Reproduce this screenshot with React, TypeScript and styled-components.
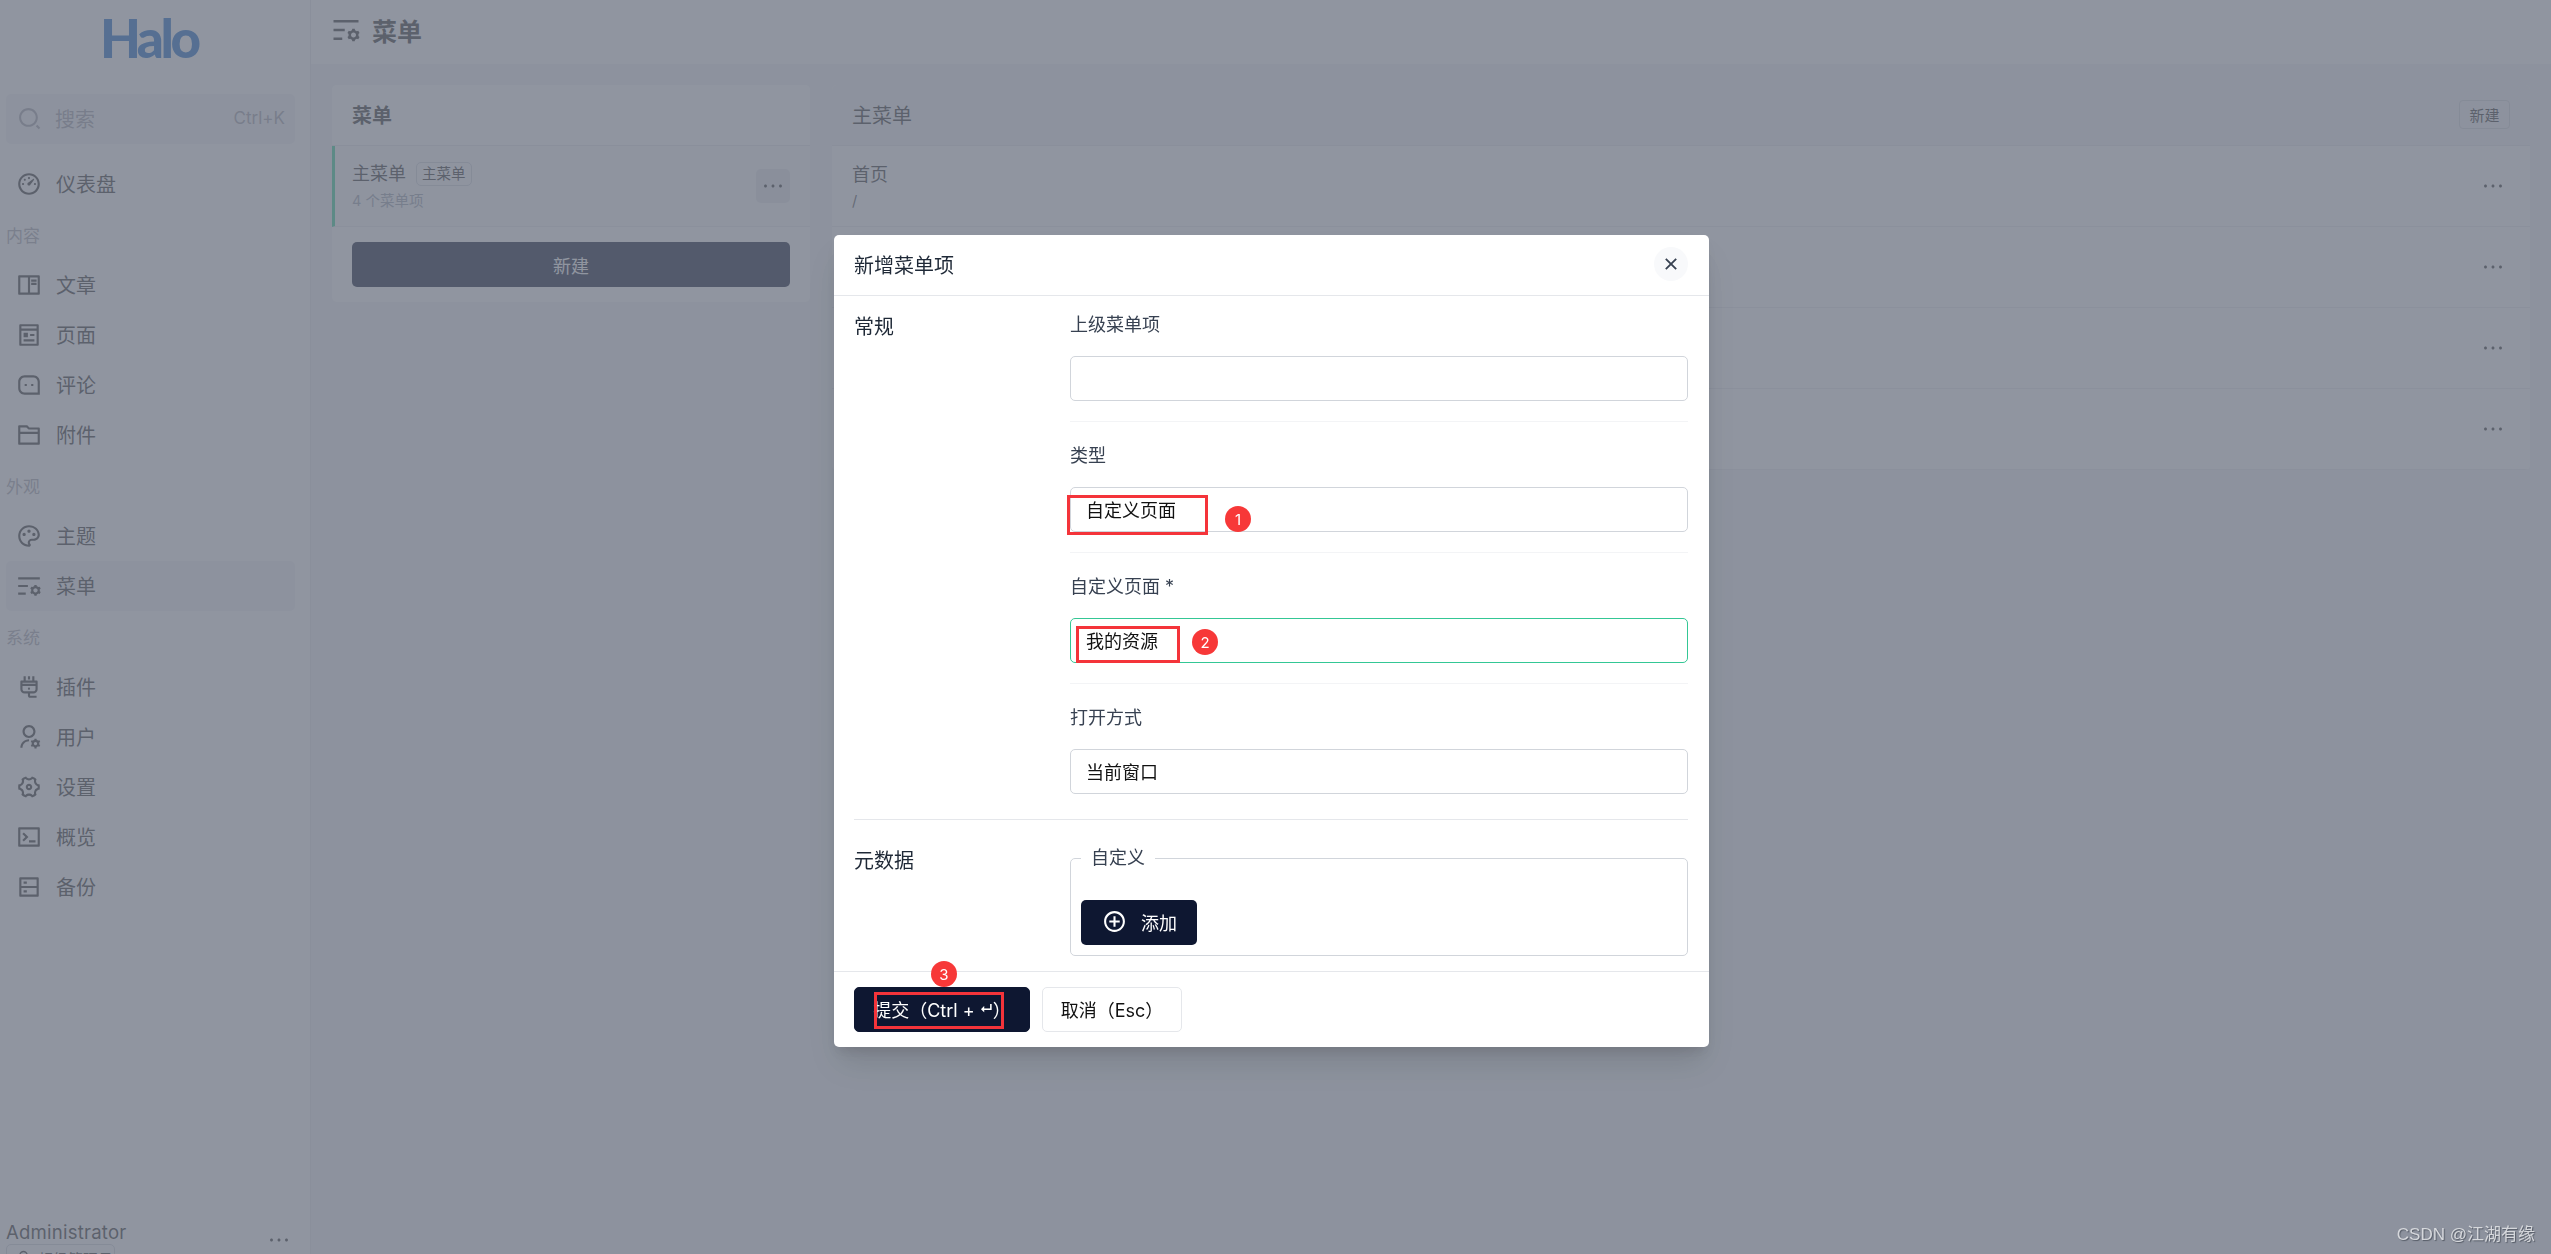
import React from "react";
import styled, { createGlobalStyle } from "styled-components";
import {
  RiAddCircleLine,
  RiBookReadLine,
  RiCloseLine,
  RiDashboard3Line,
  RiFolder2Line,
  RiListSettingsLine,
  RiMessage3Line,
  RiMoreLine,
  RiPagesLine,
  RiPaletteLine,
  RiPlug2Line,
  RiSearch2Line,
  RiServerLine,
  RiSettings4Line,
  RiTerminalBoxLine,
  RiUser3Line,
  RiUserSettingsLine,
} from "react-icons/ri";

const FONT = `Inter, "Noto Sans CJK SC", "Noto Sans", sans-serif`;

const GlobalStyle = createGlobalStyle`
  html, body {
    margin: 0;
    height: 100%;
    overflow: hidden;
    background: #f3f4f6;
  }
  * {
    box-sizing: border-box;
  }
  body {
    font-family: ${FONT};
    color: #333;
  }
`;

const Page = styled.div`
  display: grid;
  grid-template-columns: 311px 1fr;
  height: 1254px;
  overflow: hidden;
`;

const Sidebar = styled.aside`
  display: flex;
  flex-direction: column;
  height: 1254px;
  padding: 0 15px 0 6px;
  background: #fff;
  border-right: 1px solid #e5e7eb;
  overflow: hidden;
`;

const Logo = styled.div`
  height: 94px;
  padding-top: 8px;
  padding-left: 94px;
  font-family: Lato, sans-serif;
  font-size: 53px;
  line-height: 60px;
  font-weight: 900;
  letter-spacing: -3.5px;
  color: #1a6ac6;
`;

const SearchBar = styled.div`
  display: flex;
  align-items: center;
  height: 50px;
  margin-bottom: 15px;
  padding: 0 10px 2px 11px;
  background: #f3f4f6;
  border-radius: 5px;
  color: #a1a1aa;
  font-size: 20px;
  svg {
    font-size: 25px;
    margin-right: 13px;
  }
`;

const SearchHint = styled.span`
  margin-left: auto;
  font-size: 17px;
`;

const NavRow = styled.div<{ $active?: boolean }>`
  display: flex;
  align-items: center;
  height: 50px;
  padding: 0 0 1px 10px;
  font-size: 20px;
  color: #333;
  border-radius: 5px;
  background: ${(p) => (p.$active ? "#f3f4f6" : "transparent")};
  svg {
    font-size: 26px;
    margin-right: 14px;
    flex: none;
  }
`;

const NavTitle = styled.div`
  height: 51px;
  line-height: 54px;
  font-size: 17px;
  color: #a8a8b0;
`;

const Profile = styled.div`
  position: relative;
  margin-top: auto;
  height: 34px;
  flex: none;
`;

const ProfileName = styled.div`
  font-size: 18.6px;
  line-height: 24px;
  color: #333;
  letter-spacing: 0.2px;
`;

const RoleTag = styled.span`
  display: inline-flex;
  align-items: center;
  gap: 6px;
  width: 109px;
  height: 28px;
  padding-left: 8px;
  border: 1px solid #d1d5db;
  border-radius: 5px;
  font-size: 15px;
  color: #333;
  svg {
    font-size: 17px;
  }
`;

const ProfileMore = styled(RiMoreLine)`
  position: absolute;
  right: 4px;
  top: 8px;
  font-size: 24px;
  color: #333;
`;

const Main = styled.main`
  min-width: 0;
`;

const TopBar = styled.header`
  display: flex;
  align-items: center;
  gap: 11px;
  height: 64px;
  padding: 0 0 4px 20px;
  background: #fff;
  font-size: 25px;
  font-weight: 700;
  color: #333;
  svg {
    font-size: 30px;
  }
`;

const Content = styled.div`
  display: flex;
  align-items: flex-start;
  gap: 22px;
  padding: 21px 21px 0;
`;

const Card = styled.section<{ $side?: boolean }>`
  flex: ${(p) => (p.$side ? "0 0 478px" : "1")};
  background: #fff;
  border-radius: 5px;
  overflow: hidden;
`;

const CardHeader = styled.div<{ $muted?: boolean }>`
  display: flex;
  align-items: center;
  justify-content: space-between;
  height: 61px;
  padding: 0 20px 2px;
  font-size: 20px;
  font-weight: ${(p) => (p.$muted ? 400 : 700)};
  color: #333;
  background: ${(p) => (p.$muted ? "#f3f4f6" : "#fff")};
  border-bottom: 1px solid #e5e7eb;
`;

const SmallButton = styled.div`
  display: flex;
  align-items: center;
  justify-content: center;
  width: 51px;
  height: 29px;
  border: 1px solid #d1d5db;
  border-radius: 4px;
  background: transparent;
  font-size: 15px;
  font-weight: 400;
  color: #333;
`;

const ListRow = styled.div<{ $selected?: boolean }>`
  display: flex;
  align-items: center;
  justify-content: space-between;
  height: 81px;
  padding: 0 20px 0 ${(p) => (p.$selected ? "17px" : "20px")};
  background: ${(p) => (p.$selected ? "#f9fafb" : "#fff")};
  border-left: ${(p) => (p.$selected ? "3px solid #34d399" : "none")};
  border-bottom: 1px solid #e9ebee;
`;

const RowTitle = styled.div`
  display: flex;
  align-items: center;
  gap: 10px;
  font-size: 18px;
  line-height: 26px;
  color: #333;
`;

const Tag = styled.span`
  display: inline-flex;
  align-items: center;
  height: 24px;
  padding: 0 5px 1px;
  border: 1px solid #d1d5db;
  border-radius: 5px;
  font-size: 14.5px;
`;

const RowSub = styled.div`
  margin-top: 4px;
  font-size: 14.5px;
  line-height: 20px;
  color: #9ca3af;
`;

const RowSlash = styled(RowSub)`
  margin-top: 3px;
  color: #555;
`;

const DotsButton = styled.div<{ $filled?: boolean }>`
  display: flex;
  align-items: center;
  justify-content: center;
  width: 34px;
  height: 34px;
  border-radius: 5px;
  background: ${(p) => (p.$filled ? "#e5e7eb" : "transparent")};
  color: #333;
  font-size: 24px;
`;

const CardFooter = styled.div`
  padding: 15px 20px;
`;

const PrimaryWide = styled.div`
  display: flex;
  align-items: center;
  justify-content: center;
  height: 45px;
  background: #0e1731;
  border-radius: 5px;
  font-size: 18px;
  color: #fff;
`;

const Overlay = styled.div`
  position: fixed;
  inset: 0;
  background: #6b7280;
  opacity: 0.75;
`;

const ModalLayer = styled.div`
  position: fixed;
  inset: 0;
  display: flex;
  align-items: flex-start;
  padding: 235px 0 0 834px;
`;

const Modal = styled.div`
  position: relative;
  width: 875px;
  background: #fff;
  border-radius: 5px;
  box-shadow: 0 20px 30px -5px rgba(0, 0, 0, 0.12), 0 8px 12px -4px rgba(0, 0, 0, 0.1);
`;

const ModalHeader = styled.div`
  display: flex;
  align-items: center;
  justify-content: space-between;
  height: 61px;
  padding: 0 21px 2px 20px;
  border-bottom: 1px solid #e5e7eb;
  font-size: 20px;
  color: #1f2937;
`;

const CloseButton = styled.div`
  display: flex;
  align-items: center;
  justify-content: center;
  width: 34px;
  height: 34px;
  border-radius: 50%;
  background: #f8f9fb;
  color: #374151;
  font-size: 22px;
`;

const FormSection = styled.div<{ $last?: boolean }>`
  display: grid;
  grid-template-columns: 216px 1fr;
  margin: 0 21px 0 20px;
  padding-bottom: ${(p) => (p.$last ? "15px" : "5px")};
  border-bottom: ${(p) => (p.$last ? "none" : "1px solid #e5e7eb")};
`;

const SectionName = styled.div<{ $top: number }>`
  padding-top: ${(p) => p.$top}px;
  font-size: 20px;
  line-height: 26px;
  color: #1f2937;
`;

const Field = styled.div`
  padding: 21px 0 20px;
  border-bottom: 1px solid #f3f4f6;
  &:first-child {
    padding-top: 16px;
  }
  &:last-child {
    border-bottom: none;
  }
`;

const FieldLabel = styled.div`
  margin-bottom: 18px;
  font-size: 18px;
  line-height: 26px;
  color: #374151;
`;

const Input = styled.div<{ $focused?: boolean }>`
  display: flex;
  align-items: center;
  height: 45px;
  padding: 0 15px 2px;
  border: 1px solid ${(p) => (p.$focused ? "#34c795" : "#d1d5db")};
  border-radius: 5px;
  font-size: 18px;
  color: #111;
`;

const Fieldset = styled.fieldset`
  height: 111px;
  margin: 25px 0 0;
  padding: 0 10px;
  border: 1px solid #d1d5db;
  border-radius: 5px;
`;

const Legend = styled.legend`
  padding: 0 10px;
  font-size: 18px;
  line-height: 26px;
  color: #374151;
`;

const AddButton = styled.div`
  display: flex;
  align-items: center;
  gap: 14px;
  width: 116px;
  height: 45px;
  margin-top: 29px;
  padding: 0 0 2px 21px;
  background: #0e1731;
  border-radius: 5px;
  font-size: 18px;
  color: #fff;
  svg {
    font-size: 25px;
  }
`;

const ModalFooter = styled.div`
  display: flex;
  gap: 12px;
  padding: 15px 20px;
  border-top: 1px solid #e5e7eb;
`;

const FooterButton = styled.div<{ $primary?: boolean; $width: number }>`
  display: flex;
  align-items: center;
  justify-content: center;
  width: ${(p) => p.$width}px;
  height: 45px;
  padding-bottom: 2px;
  border-radius: 5px;
  border: 1px solid ${(p) => (p.$primary ? "#0e1731" : "#e5e7eb")};
  background: ${(p) => (p.$primary ? "#0e1731" : "#fff")};
  color: ${(p) => (p.$primary ? "#fff" : "#111")};
  font-size: 18px;
  white-space: pre;
`;

const ReturnKey = styled.span`
  font-size: 13px;
  font-weight: 700;
`;

const RedBox = styled.div<{ $x: number; $y: number; $w: number; $h: number }>`
  position: absolute;
  left: ${(p) => p.$x}px;
  top: ${(p) => p.$y}px;
  width: ${(p) => p.$w}px;
  height: ${(p) => p.$h}px;
  border: 3px solid #f4343a;
  pointer-events: none;
`;

const Badge = styled.div<{ $x: number; $y: number }>`
  position: absolute;
  left: ${(p) => p.$x}px;
  top: ${(p) => p.$y}px;
  display: flex;
  align-items: center;
  justify-content: center;
  width: 26px;
  height: 26px;
  border-radius: 50%;
  background: #f73838;
  color: #fff;
  font-size: 15px;
`;

const Watermark = styled.div`
  position: fixed;
  right: 16px;
  bottom: 8px;
  font-family: "Liberation Sans", "Noto Sans CJK SC", sans-serif;
  font-size: 17px;
  line-height: 22px;
  color: #d6d8dc;
  text-shadow: 1px 1px 1px #555b66;
`;

const topNav = [{ icon: <RiDashboard3Line />, label: "仪表盘" }];
const contentNav = [
  { icon: <RiBookReadLine />, label: "文章" },
  { icon: <RiPagesLine />, label: "页面" },
  { icon: <RiMessage3Line />, label: "评论" },
  { icon: <RiFolder2Line />, label: "附件" },
];
const lookNav = [
  { icon: <RiPaletteLine />, label: "主题" },
  { icon: <RiListSettingsLine />, label: "菜单", active: true },
];
const systemNav = [
  { icon: <RiPlug2Line />, label: "插件" },
  { icon: <RiUserSettingsLine />, label: "用户" },
  { icon: <RiSettings4Line />, label: "设置" },
  { icon: <RiTerminalBoxLine />, label: "概览" },
  { icon: <RiServerLine />, label: "备份" },
];

// only the first row's text shows, the others sit behind the dialog
const menuRows = [{ id: 1, name: "首页", path: "/" }, { id: 2 }, { id: 3 }, { id: 4 }] as {
  id: number;
  name?: string;
  path?: string;
}[];

type NavItem = { icon: React.ReactNode; label: string; active?: boolean };

const NavGroup: React.FC<{ items: NavItem[] }> = ({ items }) => (
  <>
    {items.map((item) => (
      <NavRow key={item.label} $active={item.active}>
        {item.icon}
        {item.label}
      </NavRow>
    ))}
  </>
);

const FormField: React.FC<{ label: string; value?: string; focused?: boolean }> = ({ label, value, focused }) => (
  <Field>
    <FieldLabel>{label}</FieldLabel>
    <Input $focused={focused}>{value}</Input>
  </Field>
);

export default function App() {
  return (
    <>
      <GlobalStyle />
      <Page>
        <Sidebar>
          <Logo>Halo</Logo>
          <SearchBar>
            <RiSearch2Line />
            搜索
            <SearchHint>Ctrl+K</SearchHint>
          </SearchBar>
          <NavGroup items={topNav} />
          <NavTitle>内容</NavTitle>
          <NavGroup items={contentNav} />
          <NavTitle>外观</NavTitle>
          <NavGroup items={lookNav} />
          <NavTitle>系统</NavTitle>
          <NavGroup items={systemNav} />
          <Profile>
            <ProfileName>Administrator</ProfileName>
            <RoleTag>
              <RiUser3Line />
              超级管理员
            </RoleTag>
            <ProfileMore />
          </Profile>
        </Sidebar>
        <Main>
          <TopBar>
            <RiListSettingsLine />
            菜单
          </TopBar>
          <Content>
            <Card $side>
              <CardHeader>菜单</CardHeader>
              <ListRow $selected>
                <div>
                  <RowTitle>
                    主菜单
                    <Tag>主菜单</Tag>
                  </RowTitle>
                  <RowSub>4 个菜单项</RowSub>
                </div>
                <DotsButton $filled>
                  <RiMoreLine />
                </DotsButton>
              </ListRow>
              <CardFooter>
                <PrimaryWide>新建</PrimaryWide>
              </CardFooter>
            </Card>
            <Card>
              <CardHeader $muted>
                主菜单
                <SmallButton>新建</SmallButton>
              </CardHeader>
              {menuRows.map((row) => (
                <ListRow key={row.id}>
                  <div>
                    <RowTitle>{row.name}</RowTitle>
                    <RowSlash>{row.path}</RowSlash>
                  </div>
                  <DotsButton>
                    <RiMoreLine />
                  </DotsButton>
                </ListRow>
              ))}
            </Card>
          </Content>
        </Main>
      </Page>
      <Overlay />
      <ModalLayer>
        <Modal>
          <ModalHeader>
            新增菜单项
            <CloseButton>
              <RiCloseLine />
            </CloseButton>
          </ModalHeader>
          <FormSection>
            <SectionName $top={18}>常规</SectionName>
            <div>
              <FormField label="上级菜单项" />
              <FormField label="类型" value="自定义页面" />
              <FormField label="自定义页面 *" value="我的资源" focused />
              <FormField label="打开方式" value="当前窗口" />
            </div>
          </FormSection>
          <FormSection $last>
            <SectionName $top={28}>元数据</SectionName>
            <Fieldset>
              <Legend>自定义</Legend>
              <AddButton>
                <RiAddCircleLine />
                添加
              </AddButton>
            </Fieldset>
          </FormSection>
          <ModalFooter>
            <FooterButton $primary $width={176}>
              提交（Ctrl + <ReturnKey>↵</ReturnKey>）
            </FooterButton>
            <FooterButton $width={140}>取消（Esc）</FooterButton>
          </ModalFooter>
          <RedBox $x={233} $y={260} $w={141} $h={40} />
          <Badge $x={391} $y={271}>1</Badge>
          <RedBox $x={242} $y={391} $w={104} $h={37} />
          <Badge $x={358} $y={394}>2</Badge>
          <RedBox $x={40} $y={757} $w={130} $h={37} />
          <Badge $x={97} $y={726}>3</Badge>
        </Modal>
      </ModalLayer>
      <Watermark>CSDN @江湖有缘</Watermark>
    </>
  );
}
